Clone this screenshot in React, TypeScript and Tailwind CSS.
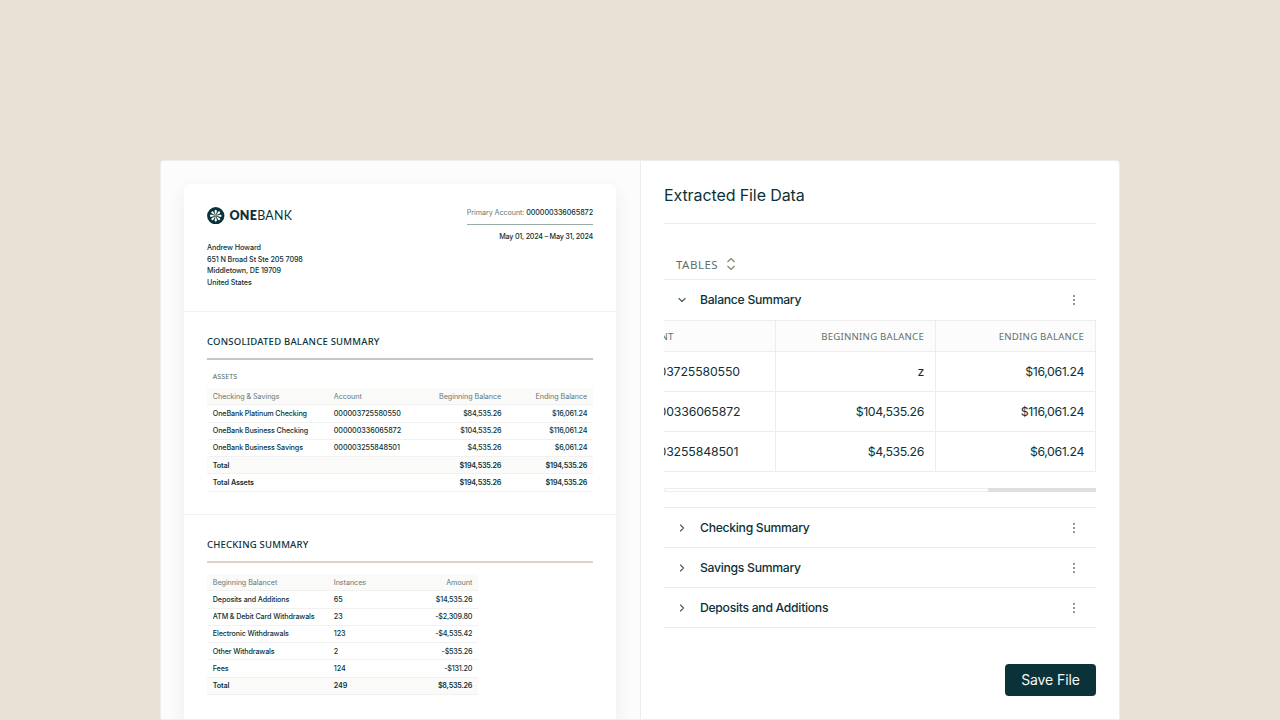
import { ChevronDown, ChevronRight } from 'lucide-react';

const accounts = [
  ['OneBank Platinum Checking', '000003725580550', '$84,535.26', '$16,061.24'],
  ['OneBank Business Checking', '000000336065872', '$104,535.26', '$116,061.24'],
  ['OneBank Business Savings', '000003255848501', '$4,535.26', '$6,061.24'],
];

const checking = [
  ['Deposits and Additions', '65', '$14,535.26'],
  ['ATM & Debit Card Withdrawals', '23', '-$2,309.80'],
  ['Electronic Withdrawals', '123', '-$4,535.42'],
  ['Other Withdrawals', '2', '-$535.26'],
  ['Fees', '124', '-$131.20'],
];

const extracted = [
  ['000003725580550', 'z', '$16,061.24'],
  ['000000336065872', '$104,535.26', '$116,061.24'],
  ['000003255848501', '$4,535.26', '$6,061.24'],
];

const collapsed = ['Checking Summary', 'Savings Summary', 'Deposits and Additions'];

function Logo() {
  return (
    <div className="flex h-[17px] items-center gap-[5px]">
      <svg width="17.5" height="17.5" viewBox="0 0 18 18" className="shrink-0">
        <circle cx="9" cy="9" r="8.9" fill="#0b3238" />
        {[0, 45, 90, 135, 180, 225, 270, 315].map((a) => (
          <path key={a} d="M9 8.4L7.7 4Q9 1.9 10.3 4Z" fill="#fff" transform={`rotate(${a} 9 9)`} />
        ))}
        <circle cx="9" cy="9" r="1.1" fill="#8a9b99" />
      </svg>
      <span className="font-[Lato] text-[12.4px] leading-[17px] font-normal tracking-[0.28px]">
        <b className="font-extrabold">ONE</b>BANK
      </span>
    </div>
  );
}

function Dots() {
  return (
    <svg width="4" height="12" viewBox="0 0 4 12" className="mr-5" fill="#8b9b9a">
      <rect x="1" y="1" width="2" height="2" />
      <rect x="1" y="5" width="2" height="2" />
      <rect x="1" y="9" width="2" height="2" />
    </svg>
  );
}

function DocRow({ cells, kind = 'body', narrow = false }: { cells: string[]; kind?: string; narrow?: boolean }) {
  const tone =
    kind === 'head'
      ? 'bg-[#fafaf9] text-[#667775]'
      : kind === 'total'
        ? 'bg-[#fafaf9] font-semibold'
        : kind === 'sum'
          ? 'font-semibold'
          : 'font-medium';
  return (
    <div
      className={`grid h-[17.28px] items-center border-b border-[#f1f2f0] px-[5.75px] pt-[1.8px] ${tone} ${
        narrow ? 'w-[271px] grid-cols-[121px_60px_1fr]' : 'grid-cols-[121px_80px_1fr_86px]'
      }`}
    >
      {cells.map((c, i) => (
        <span
          key={i}
          className={`whitespace-nowrap ${i > 1 ? 'text-right' : ''} ${
            i === 1 || kind === 'head' ? '' : i > 1 ? 'tracking-[-0.2px]' : 'tracking-[-0.13px]'
          }`}
        >
          {c}
        </span>
      ))}
    </div>
  );
}

function Statement() {
  return (
    <div className="h-[560px] w-[432px] rounded-t-[6px] bg-white text-[7.2px] tracking-[-0.05px] shadow-[0_6px_18px_rgba(60,60,40,0.08)]">
      <div className="flex h-32 justify-between border-b border-[#f1f2f0] px-[23px] pt-[23px]">
        <div>
          <Logo />
          <div className="mt-[18px] leading-[11.6px] font-medium tracking-[-0.11px]">
            <p>Andrew Howard</p>
            <p>651 N Broad St Ste 205 7098</p>
            <p>Middletown, DE 19709</p>
            <p>United States</p>
          </div>
        </div>
        <div className="text-right leading-[11px]">
          <p className="h-[18px] border-b border-[#9aabaa] font-medium tracking-[-0.08px]">
            <span className="font-normal text-[#667775]">Primary Account:</span> 000000336065872
          </p>
          <p className="mt-[6px] font-medium tracking-[-0.23px]">May 01, 2024 – May 31, 2024</p>
        </div>
      </div>

      <div className="h-[203px] border-b border-[#f1f2f0] px-[23px] pt-6">
        <h2 className="font-['Noto_Sans'] text-[9.5px] leading-3 font-medium tracking-[0.22px]">CONSOLIDATED BALANCE SUMMARY</h2>
        <div className="mt-[10px] h-[2px] bg-[#c4c9c6]" />
        <p className="flex h-[28px] items-center pt-[7px] pl-[5.75px] font-['Noto_Sans'] text-[7px] tracking-[0.1px] text-[#536765]">ASSETS</p>
        <DocRow kind="head" cells={['Checking & Savings', 'Account', 'Beginning Balance', 'Ending Balance']} />
        {accounts.map((a) => (
          <DocRow key={a[1]} cells={a} />
        ))}
        <DocRow kind="total" cells={['Total', '', '$194,535.26', '$194,535.26']} />
        <DocRow kind="sum" cells={['Total Assets', '', '$194,535.26', '$194,535.26']} />
      </div>

      <div className="px-[23px] pt-6">
        <h2 className="font-['Noto_Sans'] text-[9.5px] leading-3 font-medium tracking-[0.22px]">CHECKING SUMMARY</h2>
        <div className="mt-[10px] mb-[11px] h-[2px] bg-[#dcd4cb]" />
        <DocRow narrow kind="head" cells={['Beginning Balancet', 'Instances', 'Amount']} />
        {checking.map((c) => (
          <DocRow narrow key={c[0]} cells={c} />
        ))}
        <DocRow narrow kind="total" cells={['Total', '249', '$8,535.26']} />
      </div>
    </div>
  );
}

function ExtractedTable() {
  return (
    <div className="flex justify-end overflow-hidden border-t border-[#ecedec]">
      <div className="w-[480px] shrink-0">
        <div className="grid h-[31px] grid-cols-3 border-b border-[#ecedec] bg-[#fcfcfc] font-['Noto_Sans'] text-[9.6px] tracking-[0.24px] text-[#5d706e]">
          {['ACCOUNT', 'BEGINNING BALANCE', 'ENDING BALANCE'].map((h, i) => (
            <div key={h} className={`flex items-center border-r border-[#ecedec] px-[11px] pt-[2px] ${i > 0 ? 'justify-end' : ''}`}>
              {h}
            </div>
          ))}
        </div>
        {extracted.map((row) => (
          <div key={row[0]} className="grid h-10 grid-cols-3 border-b border-[#ecedec] text-[12.3px]">
            {row.map((c, i) => (
              <div
                key={i}
                className={`flex items-center border-r border-[#ecedec] px-[11px] pt-[2px] ${
                  i > 0 ? 'justify-end tracking-[-0.38px]' : 'pl-[12px] tracking-[-0.13px]'
                }`}
              >
                {c}
              </div>
            ))}
          </div>
        ))}
      </div>
    </div>
  );
}

export default function App() {
  return (
    <div className="h-[720px] w-[1280px] overflow-hidden bg-[#e9e1d3] px-40 pt-40 font-[Inter,sans-serif] text-[#0b3238]">
      <div className="flex h-[560px] overflow-hidden rounded-t-[4px] border border-[#ecedec] bg-white">
        <div className="w-[480px] shrink-0 overflow-hidden border-r border-[#ecedec] bg-[#fcfcfc] pt-[23px] pl-[23px]">
          <Statement />
        </div>

        <div className="flex min-w-0 flex-1 flex-col pr-[23px] pl-[23px]">
          <h1 className="flex h-[63px] items-center border-b border-[#ecedec] pt-[6px] text-base font-normal tracking-[-0.1px]">
            Extracted File Data
          </h1>
          <div className="flex h-14 items-center gap-[7px] border-b border-[#ecedec] pt-[27px] pl-3 font-['Noto_Sans'] text-[11.5px] tracking-[0.5px] text-[#5d706e]">
            TABLES
            <svg width="12" height="14" viewBox="0 0 12 14" fill="none" stroke="#7b7f68" strokeWidth="1.1" className="-mt-[2px]">
              <path d="M2.5 5L6 1.5L9.5 5M2.5 9L6 12.5L9.5 9" />
            </svg>
          </div>
          <div className="flex h-10 items-center pl-3">
            <ChevronDown size={12} strokeWidth={2.4} className="text-[#49615f]" />
            <span className="ml-3 flex-1 pt-px text-[12.2px] font-medium tracking-[-0.28px]">Balance Summary</span>
            <Dots />
          </div>
          <ExtractedTable />
          <div className="mt-4 flex h-1 justify-end rounded-sm border-y border-l border-[#ecedec]">
            <div className="-my-px h-1 w-[108px] bg-[#dde0de]" />
          </div>
          <div className="mt-[15px] border-t border-[#ecedec]">
            {collapsed.map((name) => (
              <div key={name} className="flex h-10 items-center border-b border-[#ecedec] pl-3">
                <ChevronRight size={12} strokeWidth={2.4} className="text-[#49615f]" />
                <span className="ml-3 flex-1 pt-px text-[12.2px] font-medium tracking-[-0.29px]">{name}</span>
                <Dots />
              </div>
            ))}
          </div>
          <button className="mt-9 h-8 w-[91px] self-end rounded bg-[#0b3238] text-sm tracking-[-0.1px] text-[#f5f7f5]">Save File</button>
        </div>
      </div>
    </div>
  );
}
